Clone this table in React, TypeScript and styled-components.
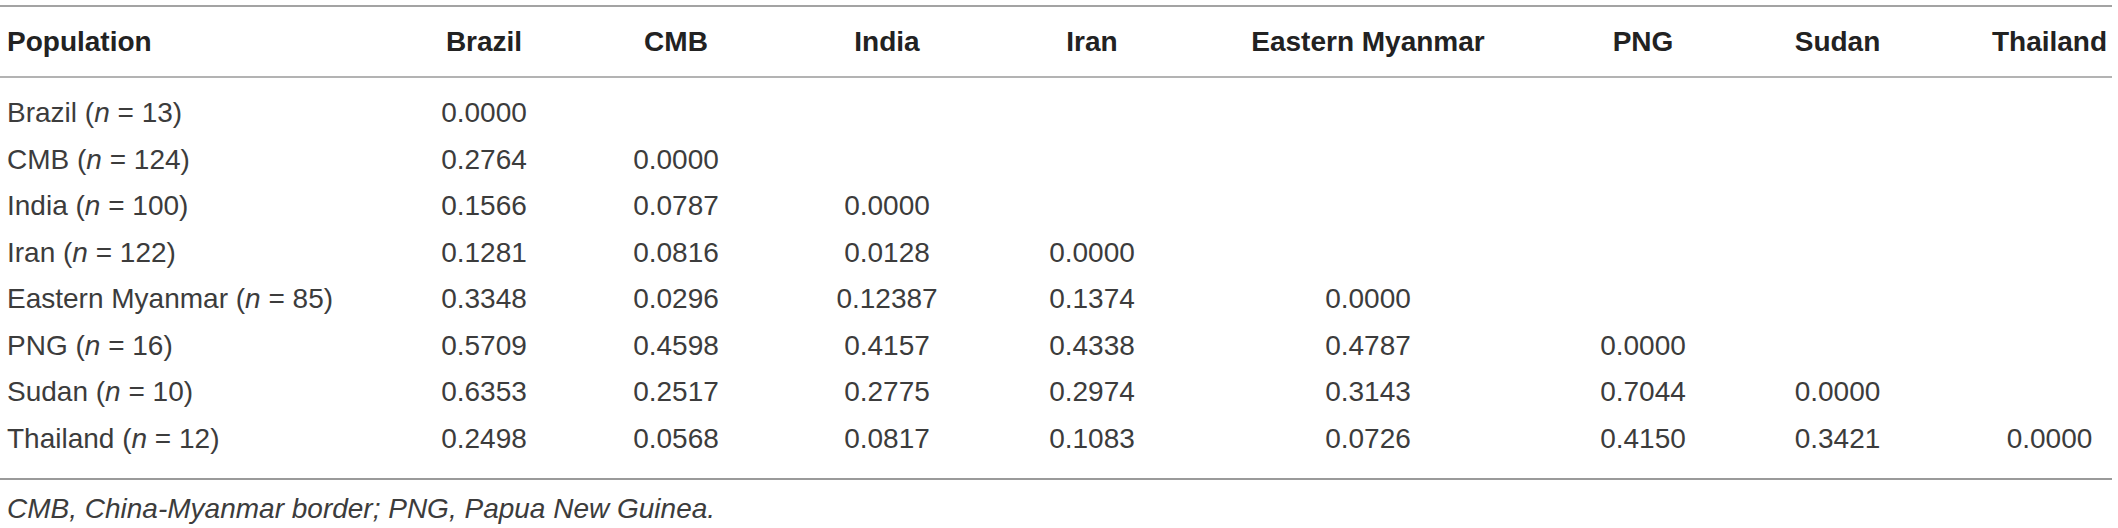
import React from "react";
import styled, { createGlobalStyle } from "styled-components";

const GlobalStyle = createGlobalStyle`
  html, body {
    margin: 0;
    padding: 0;
    background: #ffffff;
  }
  body {
    font-family: "Liberation Sans", Arial, Helvetica, sans-serif;
  }
`;

const COLUMNS = "344px 280px 104px 318px 92px 460px 90px 299px 125px";

const Page = styled.div`
  width: 2112px;
  padding-top: 5px;
`;

const Table = styled.div`
  border-top: 2px solid #a3a3a3;
  border-bottom: 2px solid #9a9a9a;
`;

const HeaderRow = styled.div`
  display: grid;
  grid-template-columns: ${COLUMNS};
  align-items: center;
  height: 69px;
  border-bottom: 2px solid #b3b3b3;
`;

const HeadCell = styled.div<{ $left?: boolean }>`
  font-size: 28px;
  font-weight: 700;
  color: #222222;
  text-align: ${(p) => (p.$left ? "left" : "center")};
  padding-left: ${(p) => (p.$left ? "7px" : "0")};
  white-space: nowrap;
`;

const Body = styled.div`
  padding: 12px 0 16px;
`;

const Row = styled.div`
  display: grid;
  grid-template-columns: ${COLUMNS};
  align-items: center;
  height: 46.5px;
`;

const RowLabel = styled.div`
  font-size: 28px;
  color: #3c3c3c;
  padding-left: 7px;
  white-space: nowrap;
`;

const Value = styled.div`
  font-size: 28px;
  color: #3c3c3c;
  text-align: center;
  white-space: nowrap;
`;

const Em = styled.i`
  font-style: italic;
`;

const Footnote = styled.div`
  font-size: 28px;
  font-style: italic;
  color: #3c3c3c;
  line-height: 36px;
  padding: 11px 7px 0;
  white-space: nowrap;
`;

const headers = [
  "Brazil",
  "CMB",
  "India",
  "Iran",
  "Eastern Myanmar",
  "PNG",
  "Sudan",
  "Thailand",
];

const rows: { name: string; n: number; values: string[] }[] = [
  { name: "Brazil", n: 13, values: ["0.0000"] },
  { name: "CMB", n: 124, values: ["0.2764", "0.0000"] },
  { name: "India", n: 100, values: ["0.1566", "0.0787", "0.0000"] },
  { name: "Iran", n: 122, values: ["0.1281", "0.0816", "0.0128", "0.0000"] },
  {
    name: "Eastern Myanmar",
    n: 85,
    values: ["0.3348", "0.0296", "0.12387", "0.1374", "0.0000"],
  },
  {
    name: "PNG",
    n: 16,
    values: ["0.5709", "0.4598", "0.4157", "0.4338", "0.4787", "0.0000"],
  },
  {
    name: "Sudan",
    n: 10,
    values: ["0.6353", "0.2517", "0.2775", "0.2974", "0.3143", "0.7044", "0.0000"],
  },
  {
    name: "Thailand",
    n: 12,
    values: ["0.2498", "0.0568", "0.0817", "0.1083", "0.0726", "0.4150", "0.3421", "0.0000"],
  },
];

export default function App() {
  return (
    <>
      <GlobalStyle />
      <Page>
        <Table>
          <HeaderRow>
            <HeadCell $left>Population</HeadCell>
            {headers.map((h) => (
              <HeadCell key={h}>{h}</HeadCell>
            ))}
          </HeaderRow>
          <Body>
            {rows.map((r) => (
              <Row key={r.name}>
                <RowLabel>
                  {r.name} (<Em>n</Em> = {r.n})
                </RowLabel>
                {headers.map((h, i) => (
                  <Value key={h}>{r.values[i] ?? ""}</Value>
                ))}
              </Row>
            ))}
          </Body>
        </Table>
        <Footnote>CMB, China-Myanmar border; PNG, Papua New Guinea.</Footnote>
      </Page>
    </>
  );
}
